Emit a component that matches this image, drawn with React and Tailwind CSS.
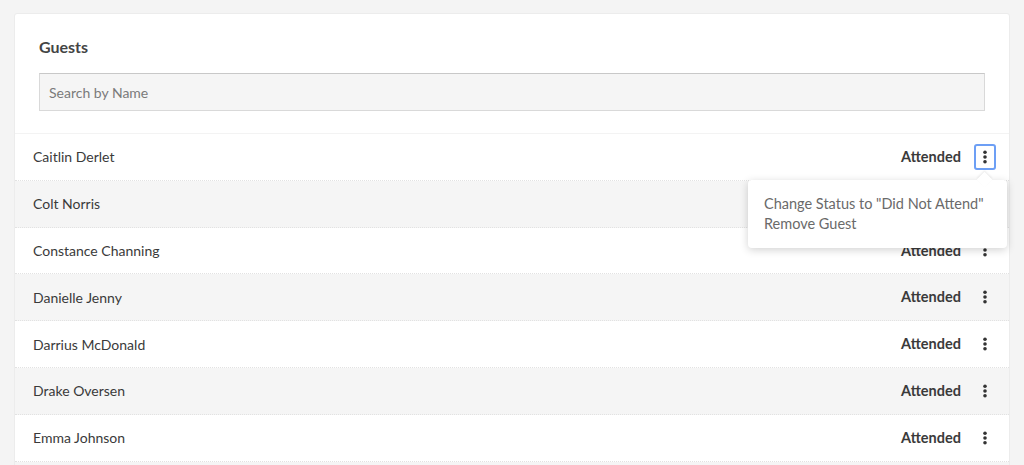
const GUESTS = [
  'Caitlin Derlet',
  'Colt Norris',
  'Constance Channing',
  'Danielle Jenny',
  'Darrius McDonald',
  'Drake Oversen',
  'Emma Johnson',
]

function Kebab() {
  return (
    <svg width="4" height="14" viewBox="0 0 4 14" className="block">
      <circle cx="2" cy="2.2" r="1.8" fill="#333" />
      <circle cx="2" cy="7" r="1.8" fill="#333" />
      <circle cx="2" cy="11.8" r="1.8" fill="#333" />
    </svg>
  )
}

export default function App() {
  return (
    <div
      className="h-[465px] overflow-hidden bg-[#f4f4f4] pt-[13px] pl-[14px] pr-[14px]"
      style={{ fontFamily: 'Lato, "Open Sans", sans-serif' }}
    >
      <div className="bg-white rounded-[3px] border border-[#ececec] min-h-[500px]">
        {/* Header */}
        <div className="px-[24px] pt-[22px] pb-[22px]">
          <h2 className="text-[16px] font-bold text-[#444] leading-[22px]">Guests</h2>
          <div className="mt-[15px] h-[38px] bg-[#f5f5f5] border border-[#d9d9d9] border-t-[#c8c8c8] flex items-center px-[9px]">
            <span className="text-[14px] text-[#7a7a7a]">Search by Name</span>
          </div>
        </div>

        {/* Rows */}
        <div className="border-t border-[#f3f3f3]">
          {GUESTS.map((name, i) => (
            <div
              key={name}
              className={`relative h-[46.8px] flex items-center justify-between pl-[18px] pr-[13px] border-b border-dotted border-[#e2e2e2] ${i % 2 === 1 ? 'bg-[#f5f5f5]' : 'bg-white'}`}
            >
              <span className="text-[14px] text-[#3a3a3a]">{name}</span>
              <div className="flex items-center">
                <span className="text-[14.5px] font-bold text-[#3a3a3a]">Attended</span>
                <button
                  className={`ml-[13px] w-[22px] h-[26px] flex items-center justify-center rounded-[3px] ${i === 0 ? 'border-2 border-[#6d9ff5]' : 'border-2 border-transparent'}`}
                >
                  <Kebab />
                </button>
              </div>

              {i === 0 && (
                <div className="absolute z-10 right-[2px] top-[46px] w-[259px] bg-white rounded-[4px] shadow-[0_2px_8px_rgba(0,0,0,0.18)] px-[16px] pt-[14px] pb-[14px]">
                  <div className="absolute -top-[6px] right-[17px] w-[11px] h-[11px] bg-white rotate-45 shadow-[-1px_-1px_2px_rgba(0,0,0,0.08)]" />
                  <div className="relative text-[14.5px] text-[#6a6a6a] leading-[20px]">
                    <div>Change Status to "Did Not Attend"</div>
                    <div>Remove Guest</div>
                  </div>
                </div>
              )}
            </div>
          ))}
          {/* next row, just off screen */}
          <div className="h-[46.8px] bg-[#f5f5f5]" />
        </div>
      </div>
    </div>
  )
}
